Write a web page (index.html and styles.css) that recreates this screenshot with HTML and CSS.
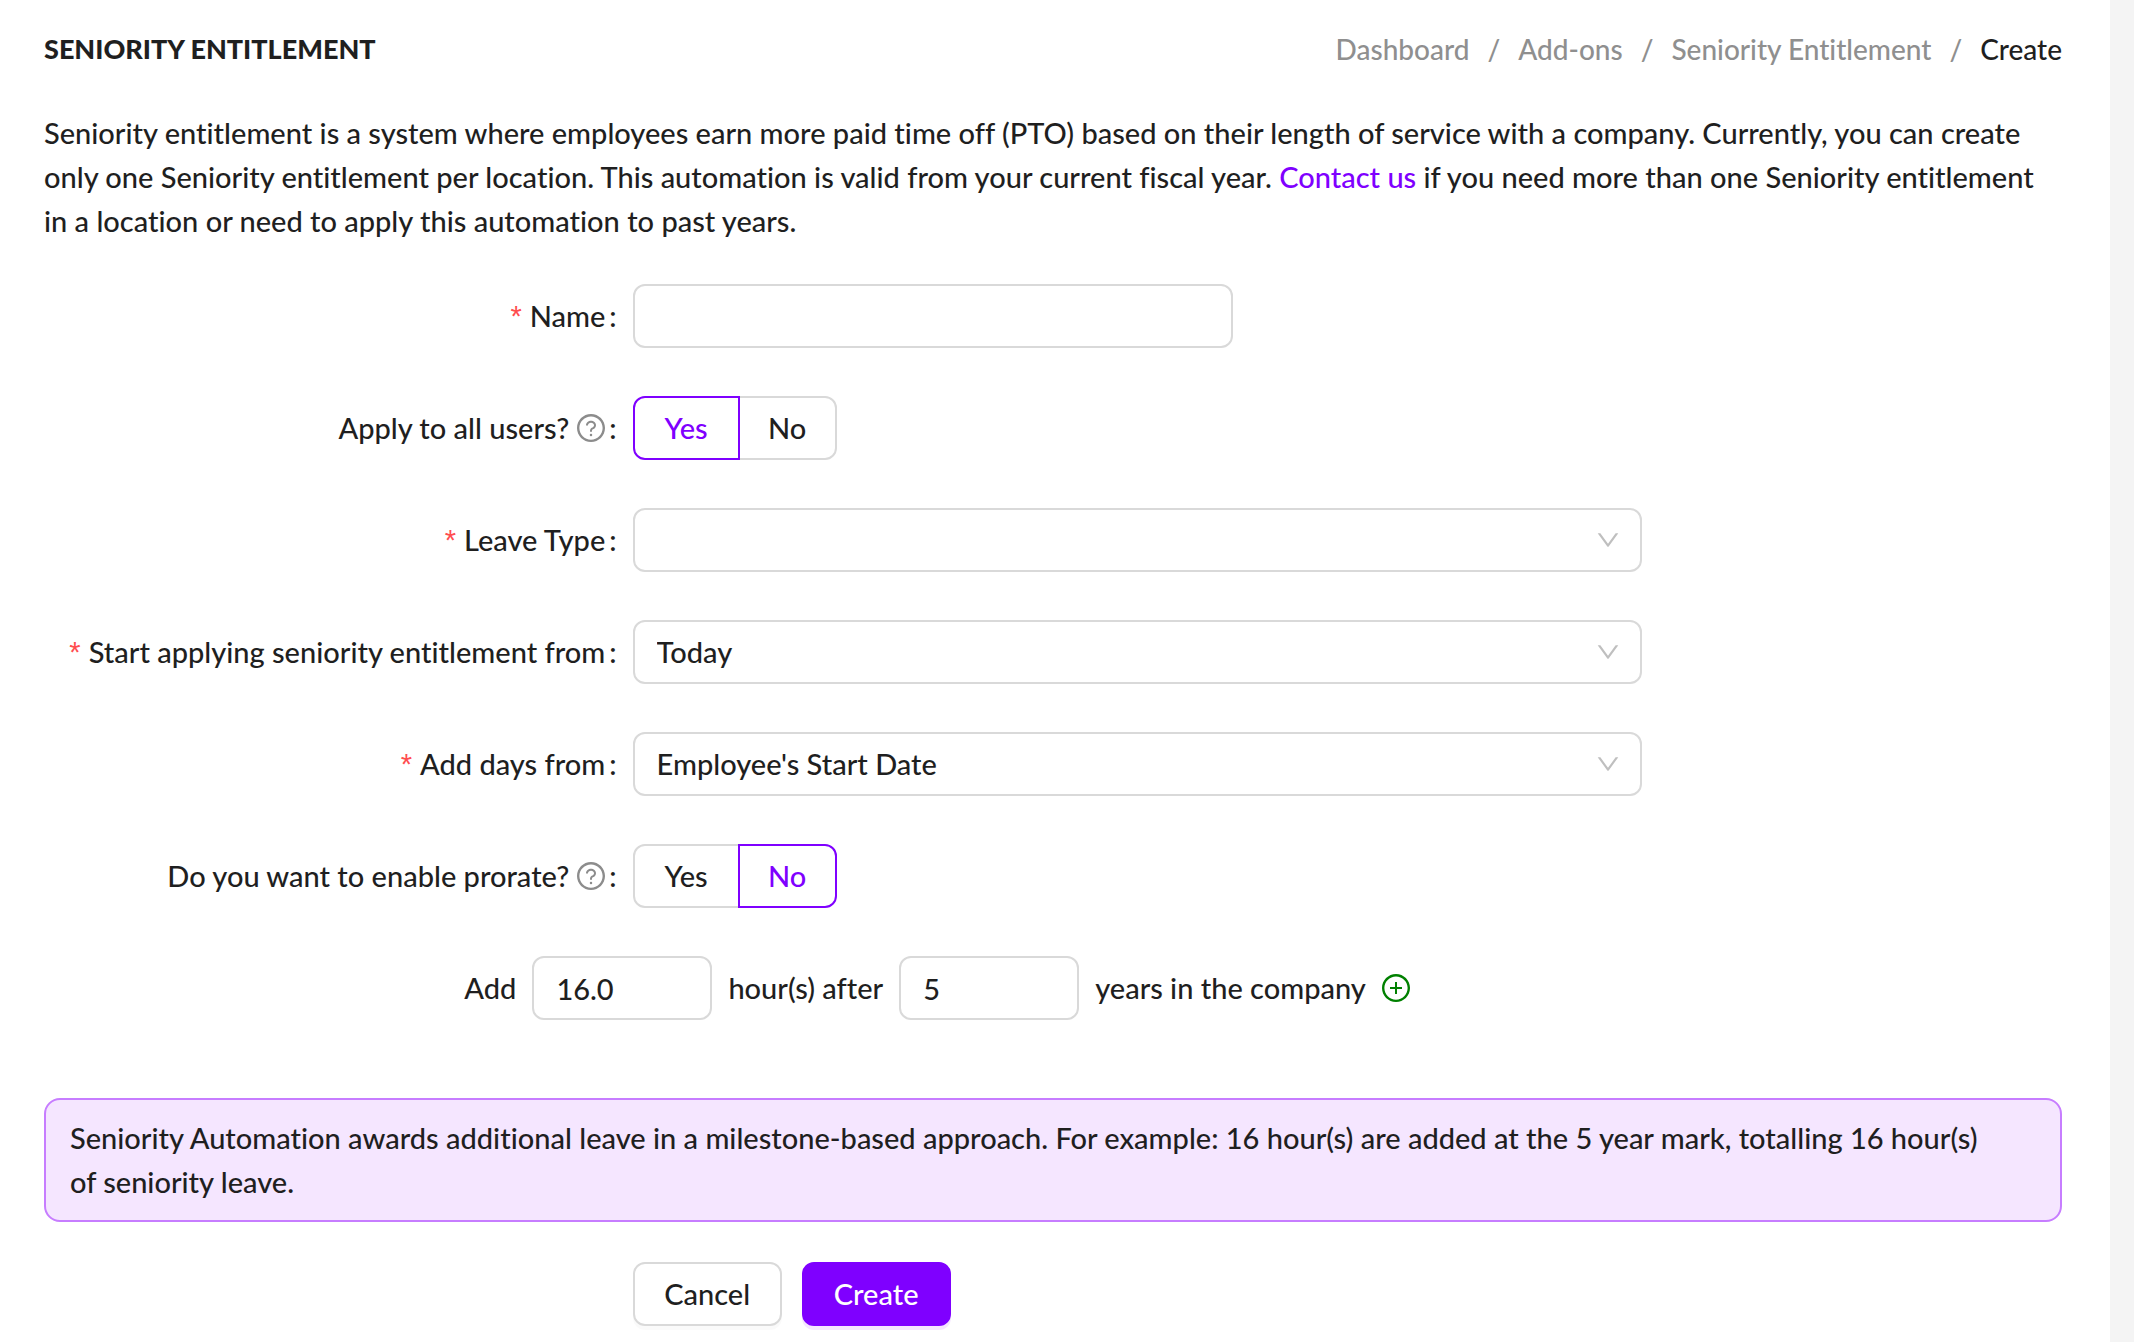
FILE: index.html
```html
<!DOCTYPE html>
<html lang="en">
<head>
  <meta charset="UTF-8">
  <meta name="viewport" content="width=device-width, initial-scale=1.0">
  <title>Seniority Entitlement - Create</title>
  <link rel="stylesheet" href="styles.css">
</head>
<body>
  <!-- shared icons -->
  <svg class="sprite" aria-hidden="true">
    <symbol id="icon-question" viewBox="64 64 896 896">
      <path d="M512 64C264.600 64 64 264.600 64 512s200.600 448 448 448 448-200.600 448-448S759.400 64 512 64zm0 820c-205.400 0-372-166.600-372-372s166.600-372 372-372 372 166.600 372 372-166.600 372-372 372z"/>
      <path d="M623.600 316.700C593.600 290.400 554 276 512 276s-81.600 14.500-111.600 40.700C369.200 344 352 380.700 352 420v7.600c0 4.400 3.600 8 8 8h48c4.400 0 8-3.600 8-8V420c0-44.100 43.100-80 96-80s96 35.900 96 80c0 31.100-22 59.600-56.100 72.700-21.200 8.100-39.200 22.300-52.100 40.900-13.100 19-19.900 41.800-19.900 64.900V620c0 4.400 3.600 8 8 8h48c4.400 0 8-3.600 8-8v-22.700a48.300 48.300 0 0 1 30.900-44.800c59-22.700 97.100-74.700 97.100-132.500.1-39.300-17.100-76-48.300-103.300zM472 732a40 40 0 1 0 80 0 40 40 0 1 0-80 0z"/>
    </symbol>
    <symbol id="icon-plus" viewBox="64 64 896 896">
      <path d="M696 480H544V328c0-4.400-3.600-8-8-8h-48c-4.400 0-8 3.600-8 8v152H328c-4.400 0-8 3.600-8 8v48c0 4.400 3.600 8 8 8h152v152c0 4.400 3.600 8 8 8h48c4.400 0 8-3.600 8-8V544h152c4.400 0 8-3.600 8-8v-48c0-4.400-3.600-8-8-8z"/>
      <path d="M512 64C264.600 64 64 264.600 64 512s200.600 448 448 448 448-200.600 448-448S759.400 64 512 64zm0 820c-205.400 0-372-166.600-372-372s166.600-372 372-372 372 166.600 372 372-166.600 372-372 372z"/>
    </symbol>
    <symbol id="icon-down" viewBox="64 64 896 896">
      <path d="M884 256h-75c-5.100 0-9.900 2.500-12.900 6.600L512 654.200 227.900 262.600c-3-4.100-7.800-6.600-12.900-6.600h-75c-6.500 0-10.300 7.400-6.500 12.700l352.600 486.100c12.800 17.600 39 17.600 51.700 0l352.600-486.100c3.900-5.300.1-12.700-6.400-12.700z"/>
    </symbol>
  </svg>

  <main class="panel">
    <header class="page-header">
      <h1>SENIORITY ENTITLEMENT</h1>
      <nav class="breadcrumb" aria-label="Breadcrumb">
        <a href="#">Dashboard</a>
        <span>/</span>
        <a href="#">Add-ons</a>
        <span>/</span>
        <a href="#">Seniority Entitlement</a>
        <span>/</span>
        <span class="current">Create</span>
      </nav>
    </header>

    <p class="intro">Seniority entitlement is a system where employees earn more paid time off (PTO) based on their length of service with a company. Currently, you can create <br>only one Seniority entitlement per location. This automation is valid from your current fiscal year. <a href="#">Contact us</a> if you need more than one Seniority entitlement <br>in a location or need to apply this automation to past years.</p>

    <form>
      <div class="form-item">
        <label class="form-label required" for="name">Name</label>
        <input class="text-input name-input" type="text" id="name">
      </div>

      <div class="form-item" role="radiogroup" aria-labelledby="usersLabel">
        <div class="form-label" id="usersLabel">Apply to all users? <svg class="help"><use href="#icon-question"/></svg></div>
        <div class="radio-group">
          <label><input type="radio" name="users" checked><span>Yes</span></label>
          <label><input type="radio" name="users"><span>No</span></label>
        </div>
      </div>

      <div class="form-item">
        <label class="form-label required" for="leaveType">Leave Type</label>
        <div class="select">
          <select id="leaveType"><option></option></select>
          <svg><use href="#icon-down"/></svg>
        </div>
      </div>

      <div class="form-item">
        <label class="form-label required" for="startFrom">Start applying seniority entitlement from</label>
        <div class="select">
          <select id="startFrom"><option>Today</option></select>
          <svg><use href="#icon-down"/></svg>
        </div>
      </div>

      <div class="form-item">
        <label class="form-label required" for="addFrom">Add days from</label>
        <div class="select">
          <select id="addFrom"><option>Employee's Start Date</option></select>
          <svg><use href="#icon-down"/></svg>
        </div>
      </div>

      <div class="form-item" role="radiogroup" aria-labelledby="prorateLabel">
        <div class="form-label" id="prorateLabel">Do you want to enable prorate? <svg class="help"><use href="#icon-question"/></svg></div>
        <div class="radio-group">
          <label><input type="radio" name="prorate"><span>Yes</span></label>
          <label><input type="radio" name="prorate" checked><span>No</span></label>
        </div>
      </div>

      <div class="milestone">
        <label for="hours">Add</label>
        <input class="text-input" type="text" id="hours" value="16.0">
        <label for="years">hour(s) after</label>
        <input class="text-input" type="text" id="years" value="5">
        <span>years in the company</span>
        <button class="add" type="button" aria-label="Add milestone"><svg><use href="#icon-plus"/></svg></button>
      </div>

      <div class="alert">Seniority Automation awards additional leave in a milestone-based approach. For example: 16 hour(s) are added at the 5 year mark, totalling 16 hour(s) <br>of seniority leave.</div>

      <div class="actions">
        <button class="btn" type="button">Cancel</button>
        <button class="btn primary" type="submit">Create</button>
      </div>
    </form>
  </main>
</body>
</html>
```
FILE: styles.css
```css
* {
  box-sizing: border-box;
}
body {
  margin: 0;
  background: #f4f4f4;
  color: #1f1f1f;
  font-family: Lato, sans-serif;
  font-size: 29px;
  font-weight: 500;
  font-variant-ligatures: none;
  line-height: 44px;
}
input, select, button {
  font: inherit;
  color: inherit;
}
a {
  color: #7f00ff;
  text-decoration: none;
}
svg {
  fill: currentColor;
}
.sprite {
  display: none;
}
.panel {
  min-height: 100vh;
  margin-right: 24px;
  padding: 27px 48px 16px 44px;
  background: #fff;
}
.page-header {
  display: flex;
  justify-content: space-between;
  margin-bottom: 40px;
}
h1 {
  margin: 0;
  font-size: 27px;
  font-weight: 900;
}
.breadcrumb {
  display: flex;
  gap: 18px;
  color: #8f8f8f;
  font-size: 28px;
}
.breadcrumb a {
  color: inherit;
}
.breadcrumb .current {
  color: #1f1f1f;
}
.intro {
  margin: 0 0 41px;
}

/* form rows */
.form-item {
  display: grid;
  grid-template-columns: 7fr 12fr 5fr;
  margin-bottom: 48px;
}
.form-label {
  display: flex;
  justify-content: flex-end;
  align-items: center;
  white-space: nowrap;
}
.form-label.required::before {
  content: "*";
  margin-right: 8px;
  color: #ff4d4f;
  font-family: "Liberation Sans", sans-serif;
}
.form-label::after {
  content: ":";
  margin: 0 16px 0 4px;
}
.help {
  width: 28px;
  height: 28px;
  margin-left: 8px;
  color: #8c8c8c;
}
.text-input, .select select {
  width: 100%;
  height: 64px;
  padding: 0 22px;
  background: #fff;
  border: 2px solid #d9d9d9;
  border-radius: 12px;
}
.name-input {
  max-width: 600px;
}
.select {
  position: relative;
}
.select select {
  display: block;
  appearance: none;
}
.select svg {
  position: absolute;
  top: 20px;
  right: 22px;
  width: 24px;
  height: 24px;
  color: #bfbfbf;
  pointer-events: none;
}

/* yes / no switches */
.radio-group {
  display: flex;
}
.radio-group label {
  position: relative;
}
.radio-group input {
  position: absolute;
  opacity: 0;
}
.radio-group span {
  display: block;
  min-width: 99px;
  height: 64px;
  padding: 0 26px;
  border: 2px solid #d9d9d9;
  line-height: 60px;
  text-align: center;
}
.radio-group label:first-child span {
  min-width: 107px;
  border-radius: 12px 0 0 12px;
}
.radio-group label:last-child {
  margin-left: -2px;
}
.radio-group label:last-child span {
  border-radius: 0 12px 12px 0;
}
.radio-group input:checked + span {
  position: relative;
  z-index: 1;
  border-color: #7f00ff;
  color: #7f00ff;
}

.milestone {
  display: flex;
  align-items: center;
  gap: 16px;
  margin: 0 0 78px 20.83%;
}
.milestone .text-input {
  width: 180px;
}
.add {
  display: flex;
  padding: 0;
  border: 0;
  background: none;
  color: #008000;
}
.add svg {
  width: 28px;
  height: 28px;
}

.alert {
  padding: 16px 24px;
  background: #f5e6ff;
  border: 2px solid #c77dff;
  border-radius: 16px;
}
.actions {
  display: flex;
  gap: 20px;
  margin: 40px 0 0 29.17%;
}
.btn {
  min-width: 149px;
  height: 64px;
  padding: 0 28px;
  background: #fff;
  border: 2px solid #d9d9d9;
  border-radius: 12px;
  box-shadow: 0 4px 0 rgba(0, 0, 0, 0.02);
}
.btn.primary {
  background: #7f00ff;
  border-color: #7f00ff;
  color: #fff;
  box-shadow: 0 4px 0 #f5e6ff;
}
```
